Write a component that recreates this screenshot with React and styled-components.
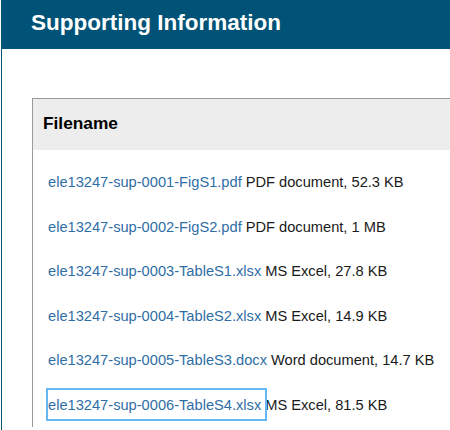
import React from 'react';
import styled, { createGlobalStyle } from 'styled-components';

const files = [
  { name: 'ele13247-sup-0001-FigS1.pdf', info: 'PDF document, 52.3 KB' },
  { name: 'ele13247-sup-0002-FigS2.pdf', info: 'PDF document, 1 MB' },
  { name: 'ele13247-sup-0003-TableS1.xlsx', info: 'MS Excel, 27.8 KB' },
  { name: 'ele13247-sup-0004-TableS2.xlsx', info: 'MS Excel, 14.9 KB' },
  { name: 'ele13247-sup-0005-TableS3.docx', info: 'Word document, 14.7 KB' },
  { name: 'ele13247-sup-0006-TableS4.xlsx', info: 'MS Excel, 81.5 KB', focused: true },
];

const App = () => {
  return (
    <>
      <GlobalStyle />
      <Page>
        <Header>
          <Title>Supporting Information</Title>
        </Header>
        <Content>
          <Table>
            <HeadRow>
              <HeadCell>Filename</HeadCell>
            </HeadRow>
            <Rows>
              {files.map((file) => (
                <Row key={file.name}>
                  <FileLink href="#" focused={file.focused ? 1 : 0}>
                    {file.name}
                  </FileLink>
                  <Info>{file.info}</Info>
                </Row>
              ))}
            </Rows>
          </Table>
        </Content>
      </Page>
    </>
  );
};
export default App;

const GlobalStyle = createGlobalStyle`
  html, body {
    margin: 0;
    padding: 0;
    overflow: hidden;
    background: #fff;
  }
  body {
    font-family: "Liberation Sans", Arial, sans-serif;
  }
`;

const Page = styled.div`
  margin-left: 1px;
  min-height: 430px;
  border-left: 1px solid #005377;
`;

const Header = styled.div`
  background: #005377;
  height: 49px;
  box-sizing: border-box;
  padding: 10px 0 0 29px;
`;

const Title = styled.h2`
  margin: 0;
  color: #fff;
  font-size: 22.5px;
  font-weight: bold;
  line-height: 25px;
`;

const Content = styled.div`
  padding: 49px 0 0 30px;
`;

const Table = styled.div`
  border-top: 1px solid #9a9a9a;
  border-left: 1px solid #9a9a9a;
`;

const HeadRow = styled.div`
  background: #ededed;
  height: 51px;
  box-sizing: border-box;
  padding: 14px 0 0 10px;
`;

const HeadCell = styled.div`
  font-size: 17.3px;
  font-weight: bold;
  line-height: 20px;
  color: #000;
`;

const Rows = styled.div`
  padding-top: 9.7px;
`;

const Row = styled.div`
  padding: 12.3px 0 12.3px 15px;
  font-size: 14.65px;
  line-height: 20px;
  white-space: nowrap;
`;

const FileLink = styled.a`
  color: #2f6ea5;
  text-decoration: none;
  padding: 7px 4px 6px 0;
  outline: ${(props) => (props.focused ? '2px solid #66b8f4' : 'none')};
`;

const Info = styled.span`
  color: #1a1a1a;
`;
